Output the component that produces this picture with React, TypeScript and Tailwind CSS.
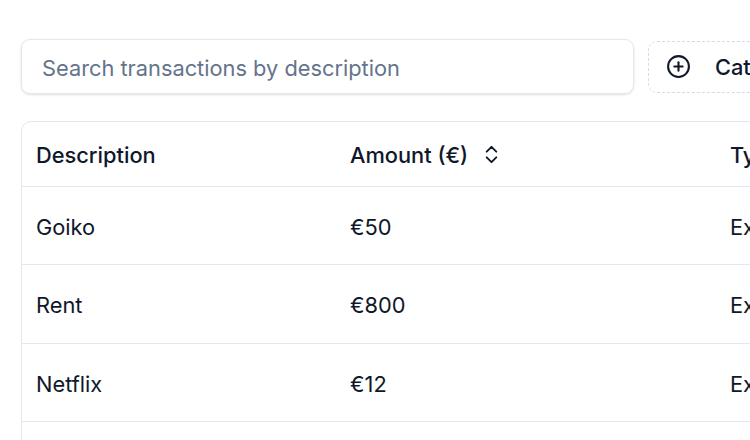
import { CirclePlus, ChevronsUpDown } from "lucide-react";

const rows = [
  { description: "Goiko", amount: "€50", type: "Expense" },
  { description: "Rent", amount: "€800", type: "Expense" },
  { description: "Netflix", amount: "€12", type: "Expense" },
  { description: "Salary", amount: "€2400", type: "Income" },
];

const App: React.FC = () => {
  return (
    <div className="w-[750px] h-[440px] overflow-hidden bg-white font-['Inter',sans-serif] text-[#0f172a]">
      <div className="w-[1100px] pl-[21px] pt-[39px]">
        <div className="flex items-center gap-[14px]">
          <input
            className="h-[55px] w-[613px] rounded-[9px] border border-[#e2e8f0] px-[20px] pt-[3px] text-[21.8px] shadow-sm outline-none placeholder:text-[#64748b]"
            placeholder="Search transactions by description"
          />
          <button className="flex h-[52px] items-center gap-[24px] rounded-[9px] border border-dashed border-[#d5dbe3] pl-[17px] pr-6 pt-[2px] text-[21.8px] font-medium">
            <CirclePlus size={25} strokeWidth={2} className="-mt-[2px]" />
            <span>Category</span>
          </button>
        </div>

        <div className="mt-[27px] w-[1000px] rounded-[10px] border border-[#e2e8f0]">
          <table className="w-full table-fixed border-collapse text-left text-[21.8px]">
            <colgroup>
              <col className="w-[314px]" />
              <col className="w-[380px]" />
              <col />
            </colgroup>
            <thead>
              <tr className="h-[64px] border-b border-[#e2e8f0]">
                <th className="pl-[14px] pt-[3px] font-medium">Description</th>
                <th className="pl-[14px] pt-[3px] font-medium">
                  <span className="flex items-center gap-[12px]">
                    Amount (€)
                    <ChevronsUpDown size={23} strokeWidth={2} className="-mt-[2px]" />
                  </span>
                </th>
                <th className="pl-[14px] pt-[3px] font-medium">Type</th>
              </tr>
            </thead>
            <tbody>
              {rows.map((row) => (
                <tr key={row.description} className="h-[78.5px] border-b border-[#e2e8f0]">
                  <td className="pl-[14px] pt-[4px]">{row.description}</td>
                  <td className="pl-[14px] pt-[4px]">{row.amount}</td>
                  <td className="pl-[14px] pt-[4px]">{row.type}</td>
                </tr>
              ))}
            </tbody>
          </table>
        </div>
      </div>
    </div>
  );
};

export default App;
